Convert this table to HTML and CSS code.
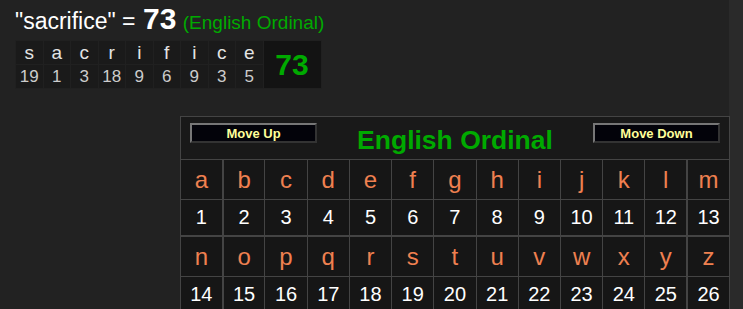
FILE: index.html
```html
<!DOCTYPE html>
<html>
<head>
	<meta charset="UTF-8">
	<title>sacrifice - English Ordinal</title>
	<link rel="stylesheet" href="styles.css">
</head>
<body>
	<div id="wrap">
		<div class="result">
			<span class="phrase">"sacrifice" =</span>
			<span class="total">73</span>
			<span class="cipher">(English Ordinal)</span>
		</div>
		<table class="breakdown">
			<tr>
				<td>s</td><td>a</td><td>c</td><td>r</td><td>i</td><td>f</td><td>i</td><td>c</td><td>e</td>
				<td class="sum" rowspan="2">73</td>
			</tr>
			<tr class="vals">
				<td>19</td><td>1</td><td>3</td><td>18</td><td>9</td><td>6</td><td>9</td><td>3</td><td>5</td>
			</tr>
		</table>
		<table class="cipher-table">
			<tr class="head">
				<td colspan="13">
					<div class="bar">
						<button class="move">Move Up</button>
						<span class="name">English Ordinal</span>
						<button class="move">Move Down</button>
					</div>
				</td>
			</tr>
			<tr class="letters">
				<td>a</td><td>b</td><td>c</td><td>d</td><td>e</td><td>f</td><td>g</td><td>h</td><td>i</td><td>j</td><td>k</td><td>l</td><td>m</td>
			</tr>
			<tr class="nums">
				<td>1</td><td>2</td><td>3</td><td>4</td><td>5</td><td>6</td><td>7</td><td>8</td><td>9</td><td>10</td><td>11</td><td>12</td><td>13</td>
			</tr>
			<tr class="letters">
				<td>n</td><td>o</td><td>p</td><td>q</td><td>r</td><td>s</td><td>t</td><td>u</td><td>v</td><td>w</td><td>x</td><td>y</td><td>z</td>
			</tr>
			<tr class="nums">
				<td>14</td><td>15</td><td>16</td><td>17</td><td>18</td><td>19</td><td>20</td><td>21</td><td>22</td><td>23</td><td>24</td><td>25</td><td>26</td>
			</tr>
		</table>
	</div>
</body>
</html>
```

FILE: styles.css
```css
*{margin:0;padding:0;}
html,body{
	height:100%;
	background:#2a2a2a;
}
body{
	font-family:"Liberation Sans",Arial,sans-serif;
	color:#ddd;
	overflow:hidden;
}
#wrap{
	width:729px;
	height:100%;
	background:#222;
	padding:4px 0 0 15px;
	box-sizing:border-box;
}
.result{
	height:30px;
	line-height:30px;
	white-space:nowrap;
}
.phrase{
	font-size:23px;
	color:#fff;
}
.total{
	font-size:30px;
	font-weight:bold;
	color:#fff;
	margin-left:3px;
}
.cipher{
	font-size:19px;
	color:#0a0;
	margin-left:2px;
}

/* word breakdown */
.breakdown{
	margin-top:6px;
	border-collapse:separate;
	border-spacing:1px;
	background:#202020;
}
.breakdown td{
	width:26.5px;
	height:23px;
	background:#1a1a1a;
	text-align:center;
	font-size:19px;
	color:#e4e4e4;
	line-height:23px;
}
.breakdown .vals td{
	font-size:17px;
	color:#ccc;
}
.breakdown td.sum{
	width:57px;
	background:#131313;
	color:#0a0;
	font-size:30px;
	font-weight:bold;
}

/* cipher chart */
.cipher-table{
	margin:27px 0 0 165px;
	width:550px;
	border-collapse:collapse;
	background:#161616;
	border:1px solid #444;
	table-layout:fixed;
}
.cipher-table td{
	border:1px solid #444;
	text-align:center;
}
.head td{
	height:42px;
	background:#191919;
	vertical-align:top;
}
.bar{
	display:flex;
	align-items:flex-start;
	justify-content:space-between;
	padding:6px 9px 0;
}
.move{
	width:127px;
	height:20px;
	background:#03030a;
	border:2px solid;
	border-color:#777 #333 #333 #777;
	color:#ffff99;
	font-family:"Liberation Sans",Arial,sans-serif;
	font-size:13px;
	font-weight:bold;
}
.name{
	font-size:26.5px;
	line-height:27px;
	margin-top:4px;
	font-weight:bold;
	color:#0a0;
}
.letters td{
	height:39px;
	font-size:24px;
	color:#ef8050;
}
.nums td{
	height:35px;
	font-size:20px;
	color:#fff;
}
.nums + .letters td{
	border-top-width:2px;
}
.letters td:first-child,.nums td:first-child{
	border-right-width:2px;
}
.letters td:last-child,.nums td:last-child{
	border-left-width:2px;
}
```
